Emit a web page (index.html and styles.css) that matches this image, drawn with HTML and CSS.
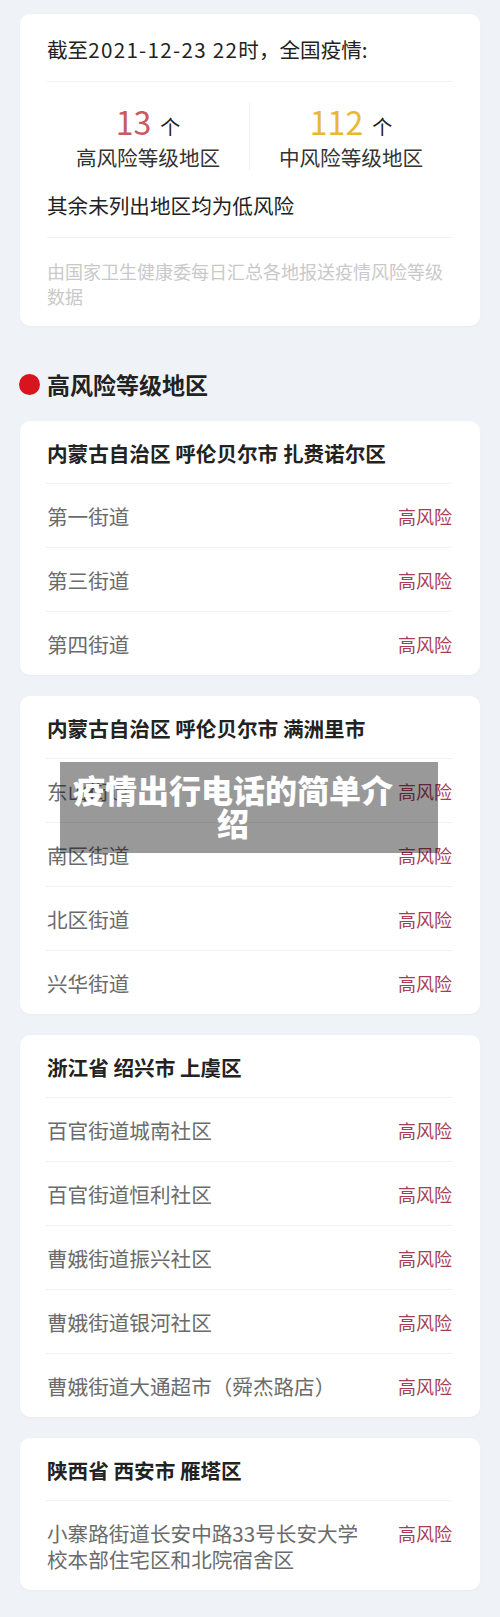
FILE: index.html
```html
<!DOCTYPE html>
<html lang="zh-CN">
<head>
    <meta charset="UTF-8">
    <meta name="viewport" content="width=device-width, initial-scale=1.0">
    <title>疫情风险等级地区</title>
    <link rel="stylesheet" href="styles.css">
</head>
<body>

<div class="page">
    <section class="card summary">
        <div class="summary-head">截至<span class="date">2021-12-23 22</span>时，全国疫情:</div>
        <div class="stats">
            <div class="stat">
                <div class="stat-num high">13<span class="unit">个</span></div>
                <div class="stat-label">高风险等级地区</div>
            </div>
            <div class="stat">
                <div class="stat-num mid">112<span class="unit">个</span></div>
                <div class="stat-label">中风险等级地区</div>
            </div>
        </div>
        <div class="low-note">其余未列出地区均为低风险</div>
        <div class="source">由国家卫生健康委每日汇总各地报送疫情风险等级数据</div>
    </section>

    <h2 class="section-title"><span class="dot"></span>高风险等级地区</h2>

    <section class="card area">
        <div class="area-name">内蒙古自治区 呼伦贝尔市 扎赉诺尔区</div>
        <div class="row"><span class="place">第一街道</span><span class="risk">高风险</span></div>
        <div class="row"><span class="place">第三街道</span><span class="risk">高风险</span></div>
        <div class="row"><span class="place">第四街道</span><span class="risk">高风险</span></div>
    </section>

    <section class="card area">
        <div class="area-name">内蒙古自治区 呼伦贝尔市 满洲里市</div>
        <div class="row"><span class="place">东山街道</span><span class="risk">高风险</span></div>
        <div class="row"><span class="place">南区街道</span><span class="risk">高风险</span></div>
        <div class="row"><span class="place">北区街道</span><span class="risk">高风险</span></div>
        <div class="row"><span class="place">兴华街道</span><span class="risk">高风险</span></div>
    </section>

    <section class="card area">
        <div class="area-name">浙江省 绍兴市 上虞区</div>
        <div class="row"><span class="place">百官街道城南社区</span><span class="risk">高风险</span></div>
        <div class="row"><span class="place">百官街道恒利社区</span><span class="risk">高风险</span></div>
        <div class="row"><span class="place">曹娥街道振兴社区</span><span class="risk">高风险</span></div>
        <div class="row"><span class="place">曹娥街道银河社区</span><span class="risk">高风险</span></div>
        <div class="row"><span class="place">曹娥街道大通超市（舜杰路店）</span><span class="risk">高风险</span></div>
    </section>

    <section class="card area">
        <div class="area-name">陕西省 西安市 雁塔区</div>
        <div class="row"><span class="place">小寨路街道长安中路33号长安大学校本部住宅区和北院宿舍区</span><span class="risk">高风险</span></div>
    </section>

    <!-- article title laid over the screenshot -->
    <div class="banner">疫情出行电话的简单介绍</div>
</div>

</body>
</html>
```

FILE: styles.css
```css
body {
    margin: 0;
    padding: 0;
    background-color: #eff2f7;
    font-family: "Noto Sans CJK SC", "Noto Sans", sans-serif;
    color: #222;
}
.page {
    position: relative; /* anchor for the banner */
    padding: 14px 20px 27px;
}
.card {
    background-color: #fff;
    border-radius: 10px;
    box-shadow: 0 1px 3px rgba(0,0,0,0.03);
}

/* summary card */
.summary {
    padding: 0 28px 0 27px;
}
.summary-head {
    padding: 22px 0 19px;
    font-size: 20.6px;
    line-height: 26px;
    border-bottom: 1px solid #f1f1f1;
}
.date {
    letter-spacing: 1.3px;
}
.stats {
    display: flex;
    padding-top: 21px;
}
.stat {
    flex: 1;
    text-align: center;
}
.stat + .stat {
    border-left: 1px solid #f0f0f0;
}
.stat-num {
    font-size: 32px;
    line-height: 36px;
    height: 41px;
}
.stat-num.high {
    color: #c95a60;
}
.stat-num.mid {
    color: #e9b731;
}
.unit {
    margin-left: 9px;
    font-size: 20px;
    line-height: 20px;
    color: #222;
}
.stat-label {
    font-size: 20.6px;
    line-height: 26px;
    color: #333;
}
.low-note {
    padding: 22px 0 19px;
    font-size: 20.6px;
    line-height: 26px;
    border-bottom: 1px solid #f1f1f1;
}
.source {
    padding: 21px 0 17px;
    font-size: 18px;
    line-height: 25px;
    color: #c9c9c9;
}

/* section heading */
.section-title {
    display: flex;
    align-items: center;
    margin: 42px 0 21px -1px;
    font-size: 23px;
    line-height: 32px;
    font-weight: bold;
    color: #222;
}
.dot {
    width: 21px;
    height: 21px;
    margin-right: 7px;
    border-radius: 50%;
    background-color: #d8141e;
}

/* area cards */
.area {
    margin-bottom: 21px;
    padding: 0 28px 0 25px;
}
.area:last-child {
    margin-bottom: 0;
}
.area-name {
    padding: 19px 0 17px 2px;
    font-size: 20.6px;
    line-height: 26px;
    font-weight: bold;
    color: #222;
}
.row {
    display: flex;
    justify-content: space-between;
    align-items: flex-start;
    padding: 19px 0 18px 2px;
    border-top: 1px solid #f1f1f1;
    line-height: 26px;
}
.place {
    max-width: 322px;
    font-size: 20.6px;
    color: #6b6b6b;
}
.risk {
    font-size: 18px;
    color: #a83b57;
}

.banner {
    position: absolute;
    left: 60px;
    top: 762px;
    width: 326px;
    padding: 11px 42px 14px 10px;
    background-color: rgba(0,0,0,0.4);
    color: #fff;
    font-size: 32px;
    line-height: 33px;
    font-weight: 900;
    text-align: center;
}
```
